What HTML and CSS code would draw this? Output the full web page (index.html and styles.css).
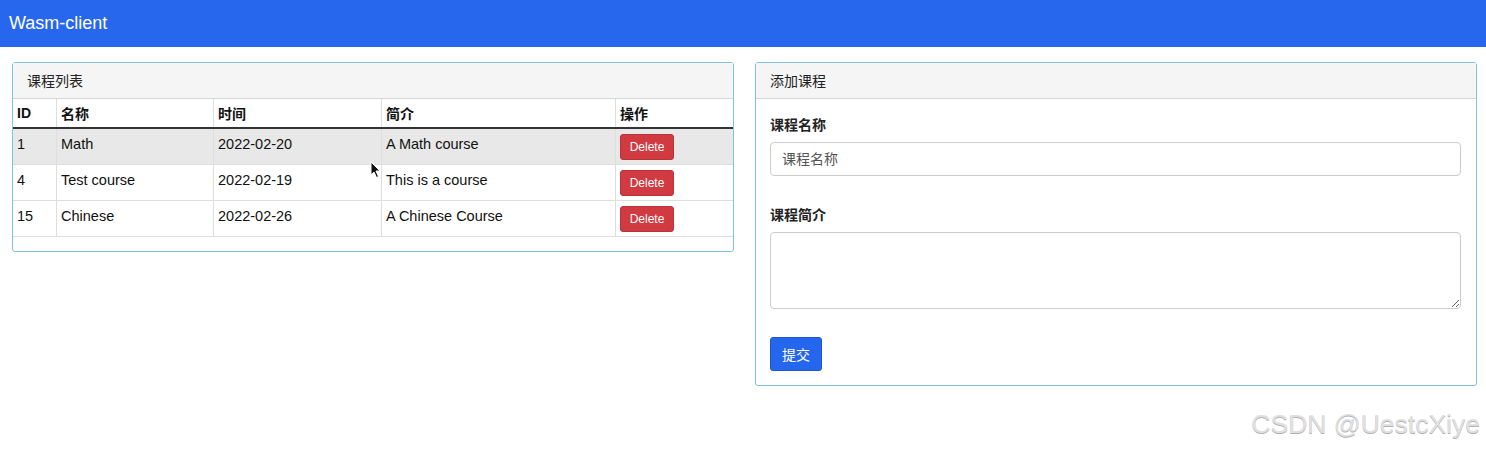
FILE: index.html
```html
<!DOCTYPE html>
<html lang="zh-CN">
<head>
    <meta charset="UTF-8">
    <meta name="viewport" content="width=device-width, initial-scale=1.0">
    <title>Wasm-client</title>
    <link rel="stylesheet" href="styles.css">
</head>
<body>
    <div class="navbar">Wasm-client</div>

    <div class="main">
        <div class="card">
            <div class="card-header">课程列表</div>
            <table class="tabela">
                <thead>
                    <tr>
                        <th class="col-id">ID</th>
                        <th class="col-nome">名称</th>
                        <th class="col-tempo">时间</th>
                        <th class="col-desc">简介</th>
                        <th>操作</th>
                    </tr>
                </thead>
                <tbody>
                    <tr class="hover">
                        <td>1</td>
                        <td>Math</td>
                        <td>2022-02-20</td>
                        <td>A Math course</td>
                        <td><button class="btn-danger">Delete</button></td>
                    </tr>
                    <tr>
                        <td>4</td>
                        <td>Test course</td>
                        <td>2022-02-19</td>
                        <td>This is a course</td>
                        <td><button class="btn-danger">Delete</button></td>
                    </tr>
                    <tr>
                        <td>15</td>
                        <td>Chinese</td>
                        <td>2022-02-26</td>
                        <td>A Chinese Course</td>
                        <td><button class="btn-danger">Delete</button></td>
                    </tr>
                </tbody>
            </table>
            <svg class="cursor" width="12" height="18" viewBox="0 0 12 18">
                <path d="M1 1 L1 14 L4 11 L6.5 16.5 L8.5 15.5 L6 10 L10 10 Z" fill="#111" stroke="#fff" stroke-width="1"/>
            </svg>
        </div>

        <div class="card">
            <div class="card-header">添加课程</div>
            <form class="card-body">
                <label for="nome">课程名称</label>
                <input type="text" id="nome" placeholder="课程名称">

                <label for="desc" class="label-2">课程简介</label>
                <textarea id="desc"></textarea>

                <button type="button" class="btn-primary">提交</button>
            </form>
        </div>
    </div>

    <div class="marca">CSDN @UestcXiye</div>
</body>
</html>
```

FILE: styles.css
```css
body {
    font-family: "Liberation Sans", Arial, "Noto Sans CJK SC", sans-serif;
    font-size: 14px;
    margin: 0;
    padding: 0;
    color: #111;
    background: #fff;
}
.navbar {
    background-color: #2767ed;
    color: #fff;
    height: 47px;
    line-height: 47px;
    padding-left: 9px;
    font-size: 18px;
}
.main {
    display: grid;
    grid-template-columns: 722px 722px;
    gap: 21px;
    padding: 15px 0 0 12px;
    align-items: start;
}
.card {
    position: relative;
    border: 1px solid #7cc5dc;
    border-radius: 3px;
    background: #fff;
    padding-bottom: 14px;
}
.card-header {
    background-color: #f5f5f5;
    border-bottom: 1px solid #d6d6d6;
    height: 35px;
    line-height: 36px;
    padding-left: 14px;
    font-size: 14px;
    color: #222;
}
.tabela {
    width: 100%;
    border-collapse: collapse;
    font-size: 14.5px;
}
.tabela th,
.tabela td {
    text-align: left;
    padding: 0 4px;
    border-left: 1px solid #dedede;
}
.tabela th:first-child,
.tabela td:first-child {
    border-left: none;
}
.tabela th {
    height: 28px;
    font-weight: bold;
    font-size: 14px;
    border-bottom: 2px solid #333;
}
.tabela td {
    height: 36px;
    border-bottom: 1px solid #dedede;
    vertical-align: top;
    padding-top: 7px;
    box-sizing: border-box;
}
.tabela tr.hover td {
    background-color: #e8e8e8;
}
.col-id { width: 35px; }
.col-nome { width: 148px; }
.col-tempo { width: 159px; }
.col-desc { width: 225px; }
.btn-danger {
    background-color: #d03a40;
    border: 1px solid #b8323a;
    color: #fff;
    font-family: "Liberation Sans", Arial, sans-serif;
    font-size: 12px;
    height: 26px;
    width: 54px;
    border-radius: 3px;
    margin-top: -2px;
    display: block;
}
.cursor {
    position: absolute;
    left: 357px;
    top: 98px;
}
.card-body {
    display: flex;
    flex-direction: column;
    align-items: flex-start;
    padding: 16px 15px 0 14px;
}
.card-body label {
    font-weight: bold;
    line-height: 20px;
    margin-bottom: 7px;
    color: #222;
}
.card-body .label-2 {
    margin-top: 29px;
}
.card-body input,
.card-body textarea {
    width: 100%;
    box-sizing: border-box;
    border: 1px solid #ccc;
    border-radius: 4px;
    font-family: "Liberation Sans", Arial, "Noto Sans CJK SC", sans-serif;
    font-size: 14px;
    margin: 0;
}
.card-body input {
    height: 34px;
    padding: 0 11px;
}
.card-body input::placeholder {
    color: #555;
}
.card-body textarea {
    height: 77px;
    resize: vertical;
}
.btn-primary {
    margin-top: 28px;
    background-color: #2566ee;
    border: 1px solid #1d56d0;
    color: #fff;
    height: 34px;
    width: 52px;
    border-radius: 3px;
    font-family: "Noto Sans CJK SC", sans-serif;
    font-size: 14px;
}
.marca {
    position: absolute;
    right: 6px;
    top: 409px;
    font-family: "Liberation Sans", Arial, sans-serif;
    font-size: 26.5px;
    color: #e0e0e0;
    text-shadow: 0 1px 0 #b0b0b0;
}
```
